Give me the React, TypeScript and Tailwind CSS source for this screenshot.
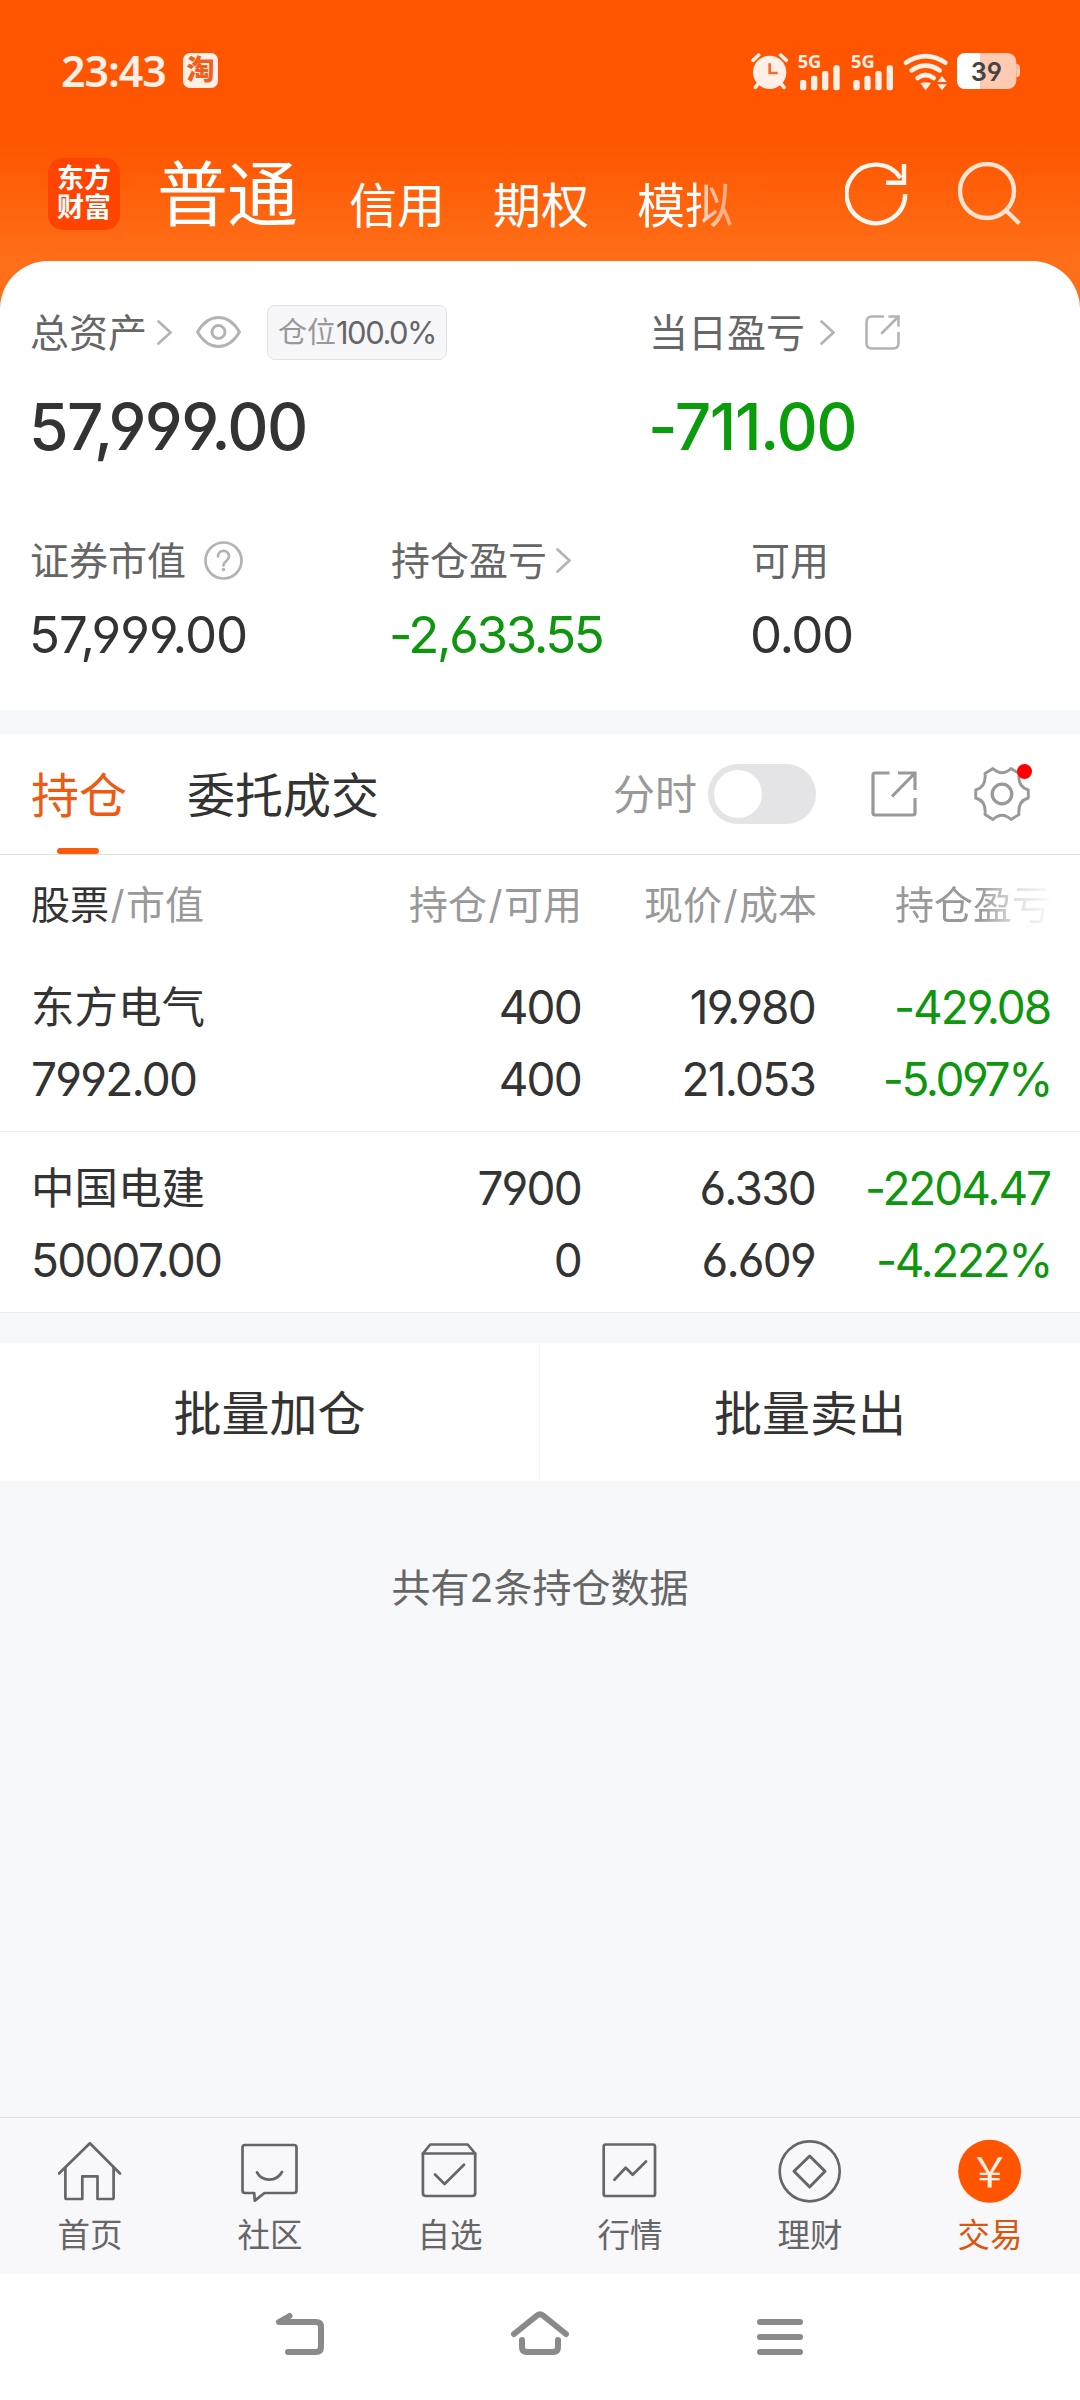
import type { ReactNode } from 'react';

const holdings = [
  {
    name: '东方电气',
    value: '7992.00',
    amount: '400',
    available: '400',
    price: '19.980',
    cost: '21.053',
    profit: '-429.08',
    rate: '-5.097%',
  },
  {
    name: '中国电建',
    value: '50007.00',
    amount: '7900',
    available: '0',
    price: '6.330',
    cost: '6.609',
    profit: '-2204.47',
    rate: '-4.222%',
  },
];

const navItems: { label: string; active?: boolean; icon: ReactNode }[] = [
  {
    label: '首页',
    icon: (
      <>
        <path d="M1 34.5 31.9 4.2 62 34.5" />
        <path d="M7.4 29v29.5q0 1.5 1.5 1.5h15.4V37.3h15.2V60h14.6q1.5 0 1.5-1.5V29" />
      </>
    ),
  },
  {
    label: '社区',
    icon: (
      <>
        <path d="M7 6h49q2.5 0 2.5 2.5v43q0 2.5-2.5 2.5H26.5l-9.7 7.6-.6-7.6H7q-2.5 0-2.5-2.5v-43Q4.5 6 7 6z" />
        <path d="M19 33.5c5.5 9.5 19.5 9.5 25-.5" />
      </>
    ),
  },
  {
    label: '自选',
    icon: (
      <>
        <path d="M4.9 14.5h52.3V54q0 3-3 3H7.9q-3 0-3-3z" />
        <path d="M4.9 14.5 12.3 5.5h37.4l7.5 9" />
        <path d="m17 35.5 9.6 9.500L46 25.7" />
      </>
    ),
  },
  {
    label: '行情',
    icon: (
      <>
        <rect x="5.7" y="5.5" width="51.3" height="51.5" rx="2" />
        <path d="m16.4 40.8 11.300-12 7 7L48 22.5" />
      </>
    ),
  },
  {
    label: '理财',
    icon: (
      <>
        <circle cx="31.7" cy="32.3" r="30" />
        <path d="M31.7 17 47 32.3 31.7 48 16 32.3z" strokeWidth="3" />
      </>
    ),
  },
  {
    label: '交易',
    active: true,
    icon: (
      <>
        <circle cx="31.7" cy="32.3" r="31.5" fill="#ff5500" stroke="none" />
        <text
          x="31.7"
          y="48"
          textAnchor="middle"
          fontSize="41"
          fill="#fff1e8"
          stroke="none"
          fontFamily='"Noto Sans CJK SC", sans-serif'
        >
          ￥
        </text>
      </>
    ),
  },
];

function StatusIcons() {
  return (
    <svg width="300" height="60" viewBox="0 0 900 180" fill="#ffefe6">
      {/* Alarm */}
      <circle cx="89" cy="97" r="50" />
      <g stroke="#ffefe6" strokeWidth="11" strokeLinecap="round" fill="none">
        <path d="M39 61 56 45M122 45l17 16M46 142l9-11M132 142l-9-11" />
      </g>
      <path d="M89 70v29h24" fill="none" stroke="#f26a2c" strokeWidth="8" />

      {/* Signal, one per SIM */}
      {[0, 160].map((offset) => (
        <g key={offset} transform={`translate(${offset} 0)`}>
          <text x="173" y="83" fontSize="53" fontWeight="700" textLength="71" lengthAdjust="spacingAndGlyphs" fontFamily='"Noto Sans", sans-serif'>
            5G
          </text>
          <rect x="180" y="120" width="19" height="31" rx="7" />
          <rect x="213" y="107" width="19" height="44" rx="7" />
          <rect x="246" y="93" width="19" height="58" rx="7" />
          <rect x="280" y="76" width="19" height="75" rx="7" />
        </g>
      ))}

      {/* Wifi */}
      <g stroke="#ffefe6" strokeWidth="14" strokeLinecap="round" fill="none">
        <path d="M498 68q59-39 118 0M515 91q42-28 84 0M533 114q24-18 48 0" />
      </g>
      <path d="M541 130q16-7 32 0l-16 21zM592 126l14-18 14 18zM592 133h28l-14 18z" />

      {/* Battery */}
      <rect x="651" y="39" width="178" height="108" rx="26" fill="#ffc9b2" />
      <path d="M720 39h-43q-26 0-26 26v56q0 26 26 26h43z" fill="#fff" />
      <path d="M829 72q11 0 11 12v16q0 12-11 12z" fill="#ffc9b2" />
      <text x="692" y="122" fontSize="79" fontWeight="600" fill="#444" textLength="94" lengthAdjust="spacingAndGlyphs" fontFamily="Inter, sans-serif">
        39
      </text>
    </svg>
  );
}

function Chevron({ className }: { className: string }) {
  return (
    <svg className={className} width="15" height="25" viewBox="0 0 15 25" fill="none" stroke="#b3b3b3" strokeWidth="2.7" strokeLinecap="round" strokeLinejoin="round">
      <path d="m1.5 1.5 12 11-12 11" />
    </svg>
  );
}

export default function App() {
  return (
    <div className="flex h-[2400px] w-[1080px] flex-col overflow-hidden bg-[#f7f8fa] font-[Inter,'Noto_Sans_CJK_SC',sans-serif] leading-none text-[#333] [font-feature-settings:'cv03','cv04']">
      <div className="bg-[linear-gradient(180deg,#ff5500_0px,#ff5500_140px,#ff6d17_255px,#ff701b_310px)]">
        {/* Status bar */}
        <div className="flex h-[142px] items-center pb-[2px] pl-[61px] pr-10">
          <span className="w-[122px] font-['Noto_Sans'] text-[43px] font-semibold tracking-[-1.1px] text-[#ffefe6]">23:43</span>
          <span className="flex h-[35px] w-[35px] items-center justify-center rounded-[7px] bg-[#ffefe6] text-[28px] font-black text-[#f0601c]">
            淘
          </span>
          <div className="ml-auto">
            <StatusIcons />
          </div>
        </div>

        {/* Header */}
        <div className="flex h-[119px] items-center pb-[15px] pl-12 text-white">
          <div className="flex h-[72px] w-[72px] flex-col items-center justify-center gap-[2px] rounded-[15px] bg-[#ff4300] pb-[2px] text-[27px] font-bold">
            <span>东方</span>
            <span>财富</span>
          </div>
          <span className="ml-[37px] text-[71px] tracking-[-1px]">普通</span>
          <div className="ml-[52px] flex gap-12 pt-[24px] text-[48px]">
            <span>信用</span>
            <span>期权</span>
            <span className="[mask-image:linear-gradient(90deg,black_64px,rgba(0,0,0,.7)_68px,rgba(0,0,0,.4)_96px)]">模拟</span>
          </div>
          <svg className="ml-[112px]" width="66" height="64" viewBox="0 0 66 64" fill="none" stroke="#fff7f0" strokeWidth="4.4">
            <path d="M60.2 32A29.3 29.3 0 1 1 55.5 16" />
            <path d="M59 2v18.7H41" />
          </svg>
          <svg className="ml-[47px]" width="64" height="64" viewBox="0 0 64 64" fill="none" stroke="#ffe3d1" strokeWidth="4.4">
            <circle cx="29" cy="29" r="27" />
            <path d="M47.5 48 61.3 61.5" />
          </svg>
        </div>

        {/* Assets */}
        <div className="rounded-t-[48px] bg-white pb-[49px] pl-[30px]">
          <div className="flex h-[142px] items-center text-[39px] text-[#666]">
            <div className="flex w-[619px] items-center">
              <span>总资产</span>
              <Chevron className="ml-[10px]" />
              <svg className="ml-6" width="45" height="32" viewBox="0 0 45 32" fill="none" stroke="#b3b3b3" strokeWidth="2.9">
                <path d="M1.5 16Q10 1.5 22.5 1.5T43.5 16Q35 30.5 22.5 30.5T1.5 16z" />
                <circle cx="22.5" cy="16" r="6.5" />
              </svg>
              <div className="ml-[26px] flex h-[55px] w-[180px] items-center justify-center rounded-lg border border-[#e3e3e6] bg-[#f7f7fa] text-[31px]">
                <span className="text-[29px] text-[#999]">仓位</span>
                <span className="tracking-[-1.5px]">100.0%</span>
              </div>
            </div>
            <span>当日盈亏</span>
            <Chevron className="ml-[15px]" />
            <svg className="ml-[30px]" width="35" height="35" viewBox="0 0 35 35" fill="none" stroke="#b3b3b3" strokeWidth="2.6" strokeLinecap="round">
              <path d="M18 1.5H7Q1.5 1.5 1.5 7v21q0 5.5 5.5 5.5h21q5.5 0 5.5-5.5V18" />
              <path d="M24.5 1.5h9v9M33 2 17 18" />
            </svg>
          </div>

          <div className="-ml-px flex h-12 items-center text-[64px] font-medium tracking-[-1.6px]">
            <span className="w-[619px]">57,999.00</span>
            <span className="tracking-[-1.4px] text-[#0a9c0a]">-711.00</span>
          </div>

          <div className="mt-[89px] grid grid-cols-[361px_360px_1fr] text-[39px] text-[#666]">
            <div className="flex h-10 items-center">
              <span>证券市值</span>
              <svg className="ml-[18px]" width="39" height="39" viewBox="0 0 39 39" fill="none" stroke="#b3b3b3" strokeWidth="2.7">
                <circle cx="19.5" cy="19.5" r="18" />
                <path d="M14 15.5c0-7.500 11-7.500 11 0 0 4.5-5.5 4.5-5.5 9" strokeLinecap="round" />
                <circle cx="19.5" cy="28.5" r="1.8" fill="#b3b3b3" stroke="none" />
              </svg>
            </div>
            <div className="flex h-10 items-center">
              <span>持仓盈亏</span>
              <Chevron className="ml-[9px]" />
            </div>
            <div className="flex h-10 items-center">可用</div>
          </div>
          <div className="-ml-px mt-[29px] grid grid-cols-[360px_361px_1fr] text-[51px] leading-[52px] tracking-[-2.4px]">
            <span className="tracking-[-1px]">57,999.00</span>
            <span className="text-[#0f960f]">-2,633.55</span>
            <span className="tracking-[-1.5px]">0.00</span>
          </div>
        </div>
      </div>

      {/* Tabs */}
      <div className="mt-6 flex h-[121px] items-center border-b border-[#dedede] bg-white pl-[31px] pr-[49px] text-[48px]">
        <div className="relative flex h-full items-center pt-[3px] text-[#ee5a12]">
          持仓
          <span className="absolute bottom-0 left-[26px] h-[6px] w-[42px] rounded-full bg-[#fa5a0a]" />
        </div>
        <span className="ml-[60px] pt-[3px]">委托成交</span>
        <span className="ml-auto pt-[2px] text-[42px] text-[#999]">分时</span>
        <div className="ml-[11px] flex h-[60px] w-[108px] items-center rounded-full bg-[#e4e4e6] pl-[6px]">
          <span className="h-12 w-12 rounded-full bg-white" />
        </div>
        <svg className="ml-[55px]" width="46" height="46" viewBox="0 0 46 46" fill="none" stroke="#999" strokeWidth="3.2">
          <path d="M18.5 2H4Q2 2 2 4v38q0 2 2 2h38q2 0 2-2V27" />
          <path d="M27 2h17v17M43.5 2.5 21 25.5" />
        </svg>
        <div className="relative ml-[57px] h-[56px] w-[57px]">
          <svg width="57" height="56" viewBox="-28 -28 57 56" fill="none" stroke="#999" strokeWidth="2.9" strokeLinejoin="round">
            <path d="M-9-25.5Q0-17 9-25.5L17-20.5Q15.5-7 26.3-4V4Q15.5 7 17 20.5L9 25.5Q0 17-9 25.5L-17 20.5Q-15.5 7-26.3 4V-4Q-15.5-7-17-20.5z" />
            <circle r="9.8" strokeWidth="3.3" />
          </svg>
          <span className="absolute -right-px -top-[2px] h-[15px] w-[15px] rounded-full bg-[#f00]" />
        </div>
      </div>

      {/* Holdings */}
      <div className="bg-white">
        <div className="grid h-24 grid-cols-[301px_250px_235px_234px] items-center pl-[31px] pt-[2px] text-[39px] text-[#999]">
          <div>
            <span className="text-[#333]">股票</span>
            <span className="mx-[1.5px]">/</span>市值
          </div>
          <span className="text-right">
            持仓<span className="mx-[1.5px]">/</span>可用
          </span>
          <span className="text-right">
            现价<span className="mx-[1.5px]">/</span>成本
          </span>
          <span className="ml-auto [mask-image:linear-gradient(90deg,black_85px,rgba(0,0,0,.3)_122px,rgba(0,0,0,.05)_156px)]">持仓盈亏</span>
        </div>
        {holdings.map((stock) => (
          <div
            key={stock.name}
            className="grid h-[181px] grid-cols-[301px_249px_234px_235px] content-start border-b border-[#ececec] pl-[31px] pt-5 text-right text-[46px] leading-[72px] tracking-[-1.8px]"
          >
            <span className="text-left text-[43.5px] tracking-normal">{stock.name}</span>
            <span>{stock.amount}</span>
            <span>{stock.price}</span>
            <span className="tracking-[-2.1px] text-[#0f960f]">{stock.profit}</span>
            <span className="text-left">{stock.value}</span>
            <span>{stock.available}</span>
            <span>{stock.cost}</span>
            <span className="-mr-px tracking-[-2.4px] text-[#0f960f]">{stock.rate}</span>
          </div>
        ))}
      </div>

      {/* Batch actions */}
      <div className="mt-[30px] grid h-[138px] grid-cols-2 items-center bg-white text-center text-[48px]">
        <div className="flex h-full items-center justify-center border-r border-[#f4f4f6] pt-[3px]">批量加仓</div>
        <div className="pt-[3px]">批量卖出</div>
      </div>

      <p className="mt-[87px] text-center text-[39px] text-[#666]">共有2条持仓数据</p>

      {/* Bottom nav */}
      <nav className="mt-auto grid h-[157px] grid-cols-6 border-t border-[#e0e0e2] bg-[#f8f8fb] pt-[21px]">
        {navItems.map((item) => (
          <div key={item.label} className="flex flex-col items-center">
            <svg width="64" height="64" viewBox="0 0 64 64" fill="none" stroke="#666" strokeWidth="2.7" strokeLinecap="round" strokeLinejoin="round">
              {item.icon}
            </svg>
            <span className={`mt-[17px] text-[32.5px] ${item.active ? 'text-[#d9560f]' : 'text-[#666]'}`}>{item.label}</span>
          </div>
        ))}
      </nav>

      {/* System navigation */}
      <div className="flex h-[126px] items-center justify-center bg-white">
        <svg width="540" height="60" viewBox="270 2307 540 60" fill="none" stroke="#8a8a8a" strokeWidth="6" strokeLinecap="round" strokeLinejoin="round">
          <path d="M289.5 2316 279 2322h37q5 0 5 5v20q0 5-5 5h-28" />
          <path d="m514 2334 23-18.500q3-2.500 6 0l23 18.500M522 2340v7q0 5 5 5h26q5 0 5-5v-7" />
          <path d="M760 2322h40M760 2337h40M760 2352h40" />
        </svg>
      </div>
    </div>
  );
}
